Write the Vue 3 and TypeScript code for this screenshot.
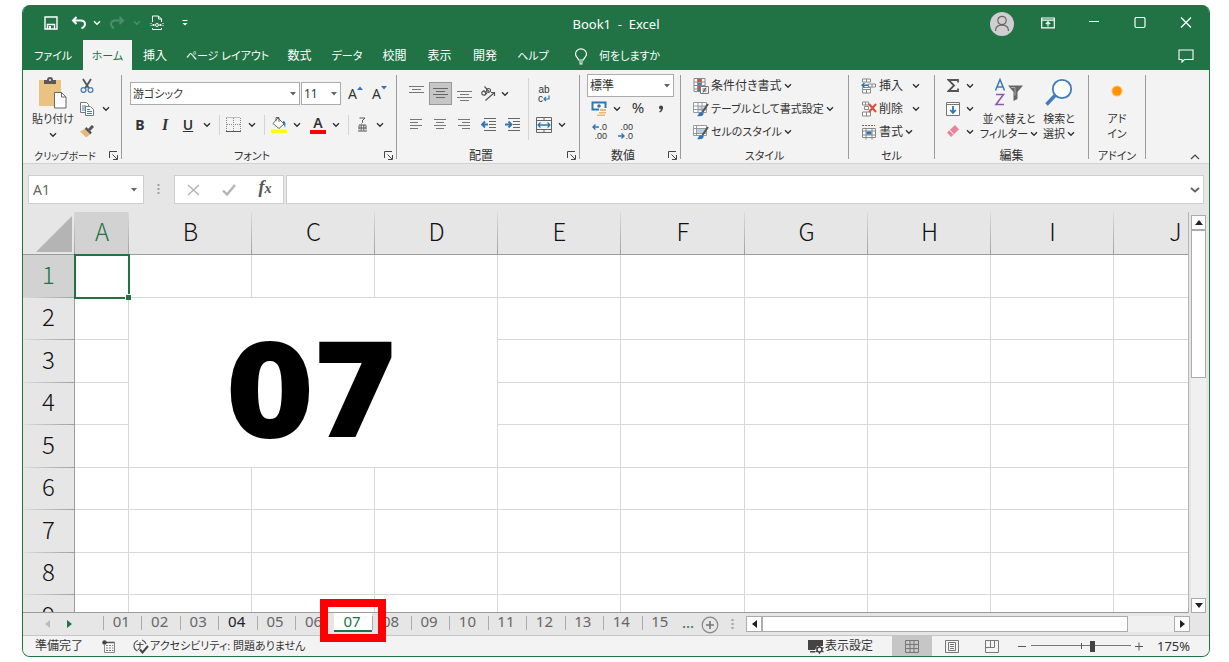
<script setup lang="ts">
import { ref } from 'vue'

interface Column {
  name: string
  width: number
}

const menuTabs: string[] = [
  'ファイル', 'ホーム', '挿入', 'ページ レイアウト', '数式', 'データ', '校閲', '表示', '開発', 'ヘルプ',
]
const activeMenu = ref('ホーム')

const columns: Column[] = [
  { name: 'A', width: 54 },
  { name: 'B', width: 123 },
  { name: 'C', width: 123 },
  { name: 'D', width: 123 },
  { name: 'E', width: 123 },
  { name: 'F', width: 124 },
  { name: 'G', width: 123 },
  { name: 'H', width: 123 },
  { name: 'I', width: 123 },
  { name: 'J', width: 123 },
]
const rows: number[] = [1, 2, 3, 4, 5, 6, 7, 8, 9]

const sheets: string[] = Array.from({ length: 15 }, (_, i) => String(i + 1).padStart(2, '0'))
const activeSheet = ref('07')

const nameBox = ref('A1')
const formula = ref('')
const zoom = ref(62)

const kanaOnly = (text: string): boolean => /^[\u30a0-\u30ff ]+$/.test(text)

// B2:D5 is one merged cell, so the cells it covers are left out of the table.
function isCovered(row: number, col: string): boolean {
  return row >= 2 && row <= 5 && 'BCD'.includes(col) && !(row === 2 && col === 'B')
}
function isMerged(row: number, col: string): boolean {
  return row === 2 && col === 'B'
}
</script>

<template>
  <div class="desktop">
    <svg class="defs" width="0" height="0" aria-hidden="true">
      <symbol id="chev" viewBox="0 0 8 6"><path d="M1 1.2 4 4.2 7 1.2" fill="none" stroke="currentColor" stroke-width="1.4" /></symbol>
      <symbol id="caret" viewBox="0 0 8 6"><path d="M1 1h6L4 4.500z" fill="currentColor" /></symbol>
      <symbol id="launch" viewBox="0 0 10 10"><path d="M.5 7V.5H8M3.500 3.500 8 8M8.500 4v4.500H4" fill="none" stroke="#444" /></symbol>
    </svg>

    <main class="window">
      <header class="title-bar">
        <div class="quick">
          <button type="button" aria-label="上書き保存">
            <svg width="14" height="14" viewBox="0 0 14 14"><path d="M1 1h12v12H1z M3.500 13V8.500h7V13" fill="none" stroke="#fff" stroke-width="1.400" /><path d="M5 10h2v3H5z" fill="#fff" /></svg>
          </button>
          <button type="button" aria-label="元に戻す">
            <svg width="16" height="14" viewBox="0 0 16 14"><path d="M5.500 1 2 4.500 5.500 8M2 4.500h7.500c3 0 4.500 1.500 4.500 3.800 0 1.800-1.200 2.900-3.500 4.200" fill="none" stroke="#fff" stroke-width="2" /></svg>
          </button>
          <button type="button" aria-label="元に戻す一覧"><svg width="8" height="6"><use href="#chev" /></svg></button>
          <button type="button" class="dim" aria-label="やり直し">
            <svg width="16" height="14" viewBox="0 0 16 14"><path d="M10.500 1 14 4.500 10.500 8M14 4.500H6.500C3.500 4.500 2 6 2 8.300c0 1.800 1.200 2.900 3 4" fill="none" stroke="currentColor" stroke-width="2" /></svg>
          </button>
          <button type="button" class="dim" aria-label="やり直し一覧"><svg width="8" height="6"><use href="#chev" /></svg></button>
          <button type="button" aria-label="印刷プレビュー">
            <svg width="14" height="16" viewBox="0 0 14 16"><path d="M2.500 7V1h6l3 3v3M8.500 1v3h3M2.500 13v1.500h9V13" fill="none" stroke="#fff" /><path d="M1 8v4M13 8v4" stroke="#fff" stroke-dasharray="1 1" /><path d="M2.500 9h2v2h-2zM9.500 9h2v2h-2z" fill="#fff" /><circle cx="7" cy="10" r="1.500" fill="none" stroke="#fff" /></svg>
          </button>
          <button type="button" aria-label="クイック アクセス ツール バーのユーザー設定">
            <svg width="8" height="8" viewBox="0 0 8 8"><path d="M1.500 1.500h5" stroke="#fff" /><path d="M1.500 4h5L4 6.500z" fill="#fff" /></svg>
          </button>
        </div>
        <h1>Book1&nbsp; -&nbsp; Excel</h1>
        <div class="window-buttons">
          <button type="button" class="avatar" aria-label="アカウント">
            <svg width="24" height="24" viewBox="0 0 24 24"><circle cx="12" cy="12" r="12" fill="#d0cece" /><circle cx="12" cy="8.500" r="4.200" fill="none" stroke="#666" stroke-width="1.200" /><path d="M5.500 19c0-3.800 2.800-5.800 6.500-5.800s6.500 2 6.500 5.800" fill="none" stroke="#666" stroke-width="1.200" /></svg>
          </button>
          <button type="button" aria-label="リボンの表示オプション">
            <svg width="14" height="12" viewBox="0 0 14 12"><path d="M.7 1h12.600v9.800H.7zM.7 3.200h12.600M7 9.500V5M4.800 7 7 4.800 9.200 7" fill="none" stroke="#fff" stroke-width="1.200" /></svg>
          </button>
          <button type="button" aria-label="最小化"><svg width="12" height="12" viewBox="0 0 12 12"><path d="M1 4.500h10" stroke="#fff" stroke-width="1.200" /></svg></button>
          <button type="button" aria-label="最大化"><svg width="12" height="12" viewBox="0 0 12 12"><rect x="1" y="0.500" width="10" height="10" rx="1.500" fill="none" stroke="#fff" stroke-width="1.200" /></svg></button>
          <button type="button" aria-label="閉じる"><svg width="12" height="12" viewBox="0 0 12 12"><path d="m1 .500 10 10M11 .5l-10 10" stroke="#fff" stroke-width="1.200" /></svg></button>
        </div>
      </header>

      <nav class="menu">
        <div class="menu-tabs">
          <button v-for="tab in menuTabs" :key="tab" type="button" :class="{ active: tab === activeMenu, kana: kanaOnly(tab) }" @click="activeMenu = tab">{{ tab }}</button>
        </div>
        <button type="button" class="tell-me kana">
          <svg width="14" height="17" viewBox="0 0 14 17"><path d="M4.500 12c0-2-3-3-3-6a5.500 5.200 0 0 1 11 0c0 3-3 4-3 6zM5 14h4M5.500 15.800h3" fill="none" stroke="#fff" stroke-width="1.200" /></svg>
          何をしますか
        </button>
        <button type="button" class="comment" aria-label="コメント">
          <svg width="16" height="14" viewBox="0 0 16 14"><path d="M1 1h14v9.500H6.500L4 13v-2.500H1z" fill="none" stroke="#fff" stroke-width="1.100" /></svg>
        </button>
      </nav>

      <section class="ribbon">
        <div class="group clipboard">
          <div class="tools">
            <button type="button" class="big">
              <svg width="30" height="32" viewBox="0 0 30 32"><path d="M1 3h22v26H1z" fill="#eac282" /><path d="M6 3h3a3 3 0 0 1 6 0h3v4H6z" fill="#595959" /><circle cx="12" cy="3" r="1" fill="#f3f3f3" /><path d="M16.500 15.500h7l4.500 4.500v11H16.500z" fill="#fff" stroke="#666" /><path d="M23.500 15.500V20H28" fill="none" stroke="#666" /></svg>
              <span>貼り付け</span>
              <svg width="8" height="6"><use href="#chev" /></svg>
            </button>
            <div class="small">
              <button type="button" aria-label="切り取り"><svg width="14" height="16" viewBox="0 0 14 16"><path d="M3 1l6 9.500M11 1 5 10.500" stroke="#555" stroke-width="1.800" /><circle cx="3.500" cy="12" r="2.400" fill="none" stroke="#4a7fb8" stroke-width="1.300" /><circle cx="10.500" cy="12" r="2.400" fill="none" stroke="#4a7fb8" stroke-width="1.300" /></svg></button>
              <span></span>
              <button type="button" aria-label="コピー"><svg width="16" height="16" viewBox="0 0 16 16"><path d="M1.500 1.500h6l2 2v8h-8z" fill="#fff" stroke="#777" /><path d="M3 5h4M3 7h3M3 9h3" stroke="#4a7fb8" /><path d="M6.500 5.500h5l3 3v6h-8z" fill="#fff" stroke="#777" /><path d="M8 8.500h3M8 10.500h5M8 12.500h5" stroke="#4a7fb8" /></svg></button>
              <button type="button" aria-label="コピーのオプション"><svg width="8" height="6"><use href="#chev" /></svg></button>
              <button type="button" aria-label="書式のコピー"><svg width="14" height="13" viewBox="0 0 14 13"><path d="m9 5 4-4" stroke="#555" stroke-width="3" /><path d="m5.500 3 5.500 5.500" stroke="#555" stroke-width="2.500" /><path d="M4.500 4 10 9.500 6 12.500 0 6.500z" fill="#eab876" /></svg></button>
            </div>
          </div>
          <footer><span class="tiny">クリップボード</span><button type="button" aria-label="クリップボードの詳細"><svg width="10" height="10"><use href="#launch" /></svg></button></footer>
        </div>
        <span class="rule"></span>

        <div class="group font">
          <div class="tools two">
            <div class="row font-top">
              <label class="combo"><select class="kana" aria-label="フォント"><option>游ゴシック</option></select><svg width="8" height="6"><use href="#caret" /></svg></label>
              <label class="combo"><select aria-label="フォント サイズ"><option>11</option></select><svg width="8" height="6"><use href="#caret" /></svg></label>
              <button type="button" class="grow" aria-label="フォント サイズの拡大">A<svg width="6" height="4" viewBox="0 0 6 4"><path d="m0 4 3-3.500L6 4z" fill="#2f75b5" /></svg></button>
              <button type="button" class="grow" aria-label="フォント サイズの縮小">A<svg width="6" height="4" viewBox="0 0 6 4"><path d="m0 0 3 3.500L6 0z" fill="#2f75b5" /></svg></button>
            </div>
            <div class="row font-bottom">
              <button type="button" class="glyph"><b>B</b></button>
              <button type="button" class="glyph"><i>I</i></button>
              <button type="button" class="glyph"><u>U</u></button>
              <button type="button" aria-label="下線の種類"><svg width="8" height="6"><use href="#chev" /></svg></button>
              <span class="thin"></span>
              <button type="button" aria-label="罫線"><svg width="15" height="15" viewBox="0 0 15 15"><path d="M.5.500h14M.5 1v13M7.500 1v13M14.500 1v13M1 7.500h13" fill="none" stroke="#888" stroke-dasharray="1 1" /><path d="M0 14.500h15" stroke="#555" /></svg></button>
              <button type="button" aria-label="罫線の種類"><svg width="8" height="6"><use href="#chev" /></svg></button>
              <span class="thin"></span>
              <button type="button" aria-label="塗りつぶしの色"><svg width="16" height="17" viewBox="0 0 16 17"><path d="m7 2 6 6-5 4.500-6-5z" fill="#fff" stroke="#666" /><path d="M5 5V1.500h3V6" fill="none" stroke="#666" /><path d="M12 5c2.500 0 3 3 2 7-.5-2-1-4-2-5z" fill="#2f75b5" /><path d="M0 13.500h16V17H0z" fill="#ff0" /></svg></button>
              <button type="button" aria-label="塗りつぶしの色一覧"><svg width="8" height="6"><use href="#chev" /></svg></button>
              <button type="button" class="font-color" aria-label="フォントの色">A</button>
              <button type="button" aria-label="フォントの色一覧"><svg width="8" height="6"><use href="#chev" /></svg></button>
              <span class="thin"></span>
              <button type="button" aria-label="ふりがな"><svg width="9" height="15" viewBox="0 0 9 15"><path d="M1.500 1h5.500L4.500 3.500M4.500 3v2.500L3.500 6.500M1 8h7M0 14h9M3.200 8v5.500M5.800 8v5.500M1 8.500v4M8 8.500v4M1 11h7" fill="none" stroke="#555" /></svg></button>
              <button type="button" aria-label="ふりがなの設定"><svg width="8" height="6"><use href="#chev" /></svg></button>
            </div>
          </div>
          <footer><span class="kana">フォント</span><button type="button" aria-label="フォントの詳細"><svg width="10" height="10"><use href="#launch" /></svg></button></footer>
        </div>
        <span class="rule"></span>

        <div class="group align">
          <div class="tools two">
            <div class="row align-top">
              <button type="button" aria-label="上揃え"><svg width="15" height="15" viewBox="0 0 15 15"><path d="M0 .500h15M3 3.500h9M0 6.500h15" stroke="#777" /></svg></button>
              <button type="button" class="pressed" aria-label="上下中央揃え"><svg width="15" height="15" viewBox="0 0 15 15"><path d="M0 2.500h15M3 5.500h9M0 8.500h15M3 11.500h9" stroke="#666" /></svg></button>
              <button type="button" aria-label="下揃え"><svg width="15" height="15" viewBox="0 0 15 15"><path d="M0 5.500h15M3 8.500h9M0 11.500h15M3 14.500h9" stroke="#777" /></svg></button>
              <button type="button" aria-label="方向"><svg width="16" height="16" viewBox="0 0 16 16"><g fill="none" stroke="#555" stroke-width="1.200"><circle cx="3.800" cy="7.200" r="2" /><path d="m3.500 4.500 3.500 3.500" /><circle cx="8.500" cy="4.500" r="2" /><path d="M4.500.5 9 5.500M5.500 14.500l9-8M14.500 10V6.500H11" /></g></svg></button>
              <button type="button" aria-label="方向の種類"><svg width="8" height="6"><use href="#chev" /></svg></button>
              <span></span>
              <span class="thin tall"></span>
              <button type="button" class="wrap" aria-label="折り返して全体を表示する">
                <span>ab</span><span>c<svg width="7" height="7" viewBox="0 0 7 7"><path d="M6 .5V4H1M3 2 1 4l2 2" fill="none" stroke="#2f75b5" stroke-width="1.200" /></svg></span>
              </button>
            </div>
            <div class="row align-bottom">
              <button type="button" aria-label="左揃え"><svg width="12" height="11" viewBox="0 0 12 11"><path d="M0 .500h12M0 3.500h8M0 6.500h12M0 9.500h8" stroke="#777" /></svg></button>
              <button type="button" aria-label="中央揃え"><svg width="12" height="11" viewBox="0 0 12 11"><path d="M0 .500h12M2 3.500h8M0 6.500h12M2 9.500h8" stroke="#777" /></svg></button>
              <button type="button" aria-label="右揃え"><svg width="12" height="11" viewBox="0 0 12 11"><path d="M0 .500h12M4 3.500h8M0 6.500h12M4 9.500h8" stroke="#777" /></svg></button>
              <button type="button" aria-label="インデントを減らす"><svg width="15" height="13" viewBox="0 0 15 13"><path d="M3 .5h12M8 3.500h7M8 6.500h7M8 9.500h7M3 12.500h12" stroke="#666" /><path d="M7 6.500H1M4 3.500l-3 3 3 3" fill="none" stroke="#2f75b5" stroke-width="1.800" /></svg></button>
              <button type="button" aria-label="インデントを増やす"><svg width="15" height="13" viewBox="0 0 15 13"><path d="M3 .5h12M8 3.500h7M8 6.500h7M8 9.500h7M3 12.500h12" stroke="#666" /><path d="M0 6.500h6M3.500 3.500l3 3-3 3" fill="none" stroke="#2f75b5" stroke-width="1.800" /></svg></button>
              <span class="thin tall"></span>
              <button type="button" aria-label="セルを結合して中央揃え"><svg width="16" height="16" viewBox="0 0 16 16"><path d="M.5.5h15v15H.5zM.5 3.500h15M.5 12.500h15M8 .5v3M8 12.500v3" fill="none" stroke="#666" /><path d="M2 8h12M4.500 5.500 2 8l2.500 2.500M11.500 5.500 14 8l-2.500 2.500" fill="none" stroke="#2f75b5" stroke-width="1.300" /></svg></button>
              <button type="button" aria-label="結合の種類"><svg width="8" height="6"><use href="#chev" /></svg></button>
            </div>
          </div>
          <footer><span>配置</span><button type="button" aria-label="配置の詳細"><svg width="10" height="10"><use href="#launch" /></svg></button></footer>
        </div>
        <span class="rule"></span>

        <div class="group number">
          <div class="tools three">
            <label class="combo"><select aria-label="表示形式"><option>標準</option></select><svg width="8" height="6"><use href="#caret" /></svg></label>
            <div class="row number-row">
              <button type="button" aria-label="通貨表示形式"><svg width="16" height="16" viewBox="0 0 16 16"><path d="M1.500 1.500h13v7h-13z" fill="#fff" stroke="#2f75b5" stroke-width="2" /><circle cx="8" cy="5" r="1.800" fill="#2f75b5" /><path d="M8 7h8v9H5v-4h3z" fill="#f3f3f3" /><path d="M9 8h6v2H9zM8 11h7v1.500H8zM6 13.500h8V15H6z" fill="#eab876" /></svg></button>
              <button type="button" aria-label="通貨の種類"><svg width="8" height="6"><use href="#chev" /></svg></button>
              <button type="button" class="percent">%</button>
              <button type="button" aria-label="桁区切りスタイル"><svg width="6" height="8" viewBox="0 0 6 8"><circle cx="3" cy="2.500" r="2" fill="#444" /><path d="M4.300 2.500c0 2-1 3.500-2.800 4.500" fill="none" stroke="#444" stroke-width="1.400" /></svg></button>
            </div>
            <div class="row number-row">
              <button type="button" class="decimal" aria-label="小数点以下の表示桁数を増やす"><span><svg width="7" height="6" viewBox="0 0 7 6"><path d="M7 3H1M3.500.5 1 3l2.500 2.500" fill="none" stroke="#2f75b5" stroke-width="1.400" /></svg>.0</span><span>.00</span></button>
              <span></span>
              <button type="button" class="decimal" aria-label="小数点以下の表示桁数を減らす"><span>.00</span><span><svg width="7" height="6" viewBox="0 0 7 6"><path d="M0 3h6M3.500.5 6 3 3.500 5.500" fill="none" stroke="#2f75b5" stroke-width="1.400" /></svg>.0</span></button>
            </div>
          </div>
          <footer><span>数値</span><button type="button" aria-label="表示形式の詳細"><svg width="10" height="10"><use href="#launch" /></svg></button></footer>
        </div>
        <span class="rule"></span>

        <div class="group styles">
          <div class="tools three">
            <button type="button" class="item">
              <svg width="16" height="16" viewBox="0 0 16 16"><path d="M1 .5h11v13H1zM4.500.5v13M8.500.5v13M1 4h11M1 7.500h11M1 11h11" fill="#fff" stroke="#888" /><path d="M5 1h3v3H5zM5 8h3v3H5z" fill="#d8503c" /><path d="M5 4.500h3v3H5zM5 11h2v2H5z" fill="#4a7fb8" /><path d="M7.500 8.500h8v7h-8z" fill="#fff" stroke="#777" /><path d="M9.500 11h4M9.500 13h4M13 9.500l-3 5" stroke="#555" /></svg>
              条件付き書式<svg width="8" height="6"><use href="#chev" /></svg>
            </button>
            <button type="button" class="item kana">
              <svg width="16" height="16" viewBox="0 0 16 16"><path d="M.5 1.500h13v10H.5z" fill="#fff" /><path d="M5 5h8v5H5z" fill="#c9dbee" /><path d="M.5 1.500h13v10H.5zM5 1.500v10M9 1.500v10M.5 5h13M.5 8.500h13" fill="none" stroke="#999" /><path d="m15 3-5.500 8" stroke="#555" stroke-width="2" /><path d="M4 15c1.500-.5 1.500-4 4.500-4s2.500 3 .5 3.800C8 15.300 5 15.300 4 15z" fill="#2f75b5" /></svg>
              テーブルとして書式設定<svg width="8" height="6"><use href="#chev" /></svg>
            </button>
            <button type="button" class="item kana">
              <svg width="16" height="16" viewBox="0 0 16 16"><path d="M.5 1.500h13v10H.5z" fill="#fff" /><path d="M4 5h9v4H4z" fill="#b8cfe6" /><path d="M.5 1.500h13v10H.5zM3.500 1.500v10M.5 4.500h13M.5 9.500h13" fill="none" stroke="#999" /><path d="m15 3-5.500 8" stroke="#555" stroke-width="2" /><path d="M4 15c1.500-.5 1.500-4 4.500-4s2.500 3 .5 3.800C8 15.300 5 15.300 4 15z" fill="#2f75b5" /></svg>
              セルのスタイル<svg width="8" height="6"><use href="#chev" /></svg>
            </button>
          </div>
          <footer><span class="kana">スタイル</span></footer>
        </div>
        <span class="rule"></span>

        <div class="group cells">
          <div class="tools three">
            <button type="button" class="item wide">
              <svg width="16" height="16" viewBox="0 0 16 16"><path d="M1.500 1h8v3h-8zM5.500 1v3M1.500 11.500h8v3.500h-8zM5.500 11.500V15M1.500 11.500V9.500h8v2M7.500 6h7v3h-7zM11 6v3" fill="#fff" stroke="#888" /><path d="M7 7.300H1M3.500 5 1 7.300l2.500 2.200" fill="none" stroke="#2f75b5" stroke-width="1.400" /></svg>
              挿入<svg width="8" height="6"><use href="#chev" /></svg>
            </button>
            <button type="button" class="item wide">
              <svg width="16" height="16" viewBox="0 0 16 16"><path d="M1.500 1h6v3h-6zM4.500 1v3M1.500 11h8v4h-8zM5.500 11v4M3.500 5.500h4v3h-4z" fill="#fff" stroke="#888" /><path d="m8 3 7 8M15 3l-7 8" stroke="#d8503c" stroke-width="2" /></svg>
              削除<svg width="8" height="6"><use href="#chev" /></svg>
            </button>
            <button type="button" class="item">
              <svg width="16" height="16" viewBox="0 0 16 16"><path d="M1 1.500h13" stroke="#2f75b5" stroke-dasharray="2 1" /><path d="M1.500 4.500h13v9h-13zM1.500 7h13M1.500 11h13M5 4.500v11M11 4.500v11" fill="#fff" stroke="#888" /><path d="M5.500 7.500h5v3h-5z" fill="#2f75b5" /></svg>
              書式<svg width="8" height="6"><use href="#chev" /></svg>
            </button>
          </div>
          <footer><span class="kana">セル</span></footer>
        </div>
        <span class="rule"></span>

        <div class="group editing">
          <div class="tools">
            <div class="edit-small">
              <button type="button" aria-label="オート SUM"><svg width="12" height="13" viewBox="0 0 12 13"><path d="M11 3.500V1H1.500L7 6.500 1.500 12H11V9.500" fill="none" stroke="#555" stroke-width="1.800" /></svg></button>
              <button type="button" aria-label="オート SUM の種類"><svg width="8" height="6"><use href="#chev" /></svg></button>
              <button type="button" aria-label="フィル"><svg width="14" height="14" viewBox="0 0 14 14"><path d="M.5.5h13v13H.5z" fill="#fff" stroke="#777" /><path d="M.5 2.500h13" stroke="#777" /><path d="M7 4v7M4.200 8 7 11l2.800-3" fill="none" stroke="#2f75b5" stroke-width="1.800" /></svg></button>
              <button type="button" aria-label="フィルの種類"><svg width="8" height="6"><use href="#chev" /></svg></button>
              <button type="button" aria-label="クリア"><svg width="14" height="13" viewBox="0 0 14 13"><path d="m9 0 4 4.500-8 7.500-4-4.500z" fill="#e8839b" /><path d="m3.700 5 4 4.500" stroke="#fff" /></svg></button>
              <button type="button" aria-label="クリアの種類"><svg width="8" height="6"><use href="#chev" /></svg></button>
            </div>
            <button type="button" class="big">
              <svg width="30" height="32" viewBox="0 0 30 32"><path d="M1.500 13.500 6 2.500l4.500 11M3 10h6" fill="none" stroke="#3f7cc0" stroke-width="1.600" /><path d="M2 17.500h7.500L2 27.500h8" fill="none" stroke="#8e58ae" stroke-width="1.600" /><path d="M14 8.500h15l-5.500 6.500v7l-4 2v-9z" fill="#666" /><path d="M17 10.500h4v8" fill="none" stroke="#aaa" /></svg>
              <span>並べ替えと</span>
              <span>フィルター<svg width="8" height="6"><use href="#chev" /></svg></span>
            </button>
            <button type="button" class="big find">
              <svg width="30" height="32" viewBox="0 0 30 32"><circle cx="18" cy="12" r="9.200" fill="#fff" stroke="#3f7cb8" stroke-width="1.800" /><path d="m11 18.500-8.500 9" stroke="#3f7cb8" stroke-width="3.500" /></svg>
              <span>検索と</span>
              <span>選択<svg width="8" height="6"><use href="#chev" /></svg></span>
            </button>
          </div>
          <footer><span>編集</span></footer>
        </div>
        <span class="rule"></span>

        <div class="group addin">
          <div class="tools">
            <button type="button" class="big">
              <svg width="30" height="32" viewBox="0 0 30 32"><circle cx="15" cy="14" r="5.500" fill="#ffc36b" /><circle cx="15" cy="14" r="4.500" fill="#ff9200" /></svg>
              <span>アド</span>
              <span>イン</span>
            </button>
          </div>
          <footer><span class="kana">アドイン</span></footer>
        </div>
        <span class="rule"></span>
        <button type="button" class="collapse" aria-label="リボンを折りたたむ"><svg width="10" height="6" viewBox="0 0 10 6"><path d="m1 5 4-4 4 4" fill="none" stroke="#444" stroke-width="1.200" /></svg></button>
      </section>

      <section class="formula-bar">
        <label class="name-box"><input v-model="nameBox" aria-label="名前ボックス"><svg width="8" height="6"><use href="#caret" /></svg></label>
        <svg class="grip" width="3" height="12" viewBox="0 0 3 12"><path d="M.5 1h2v2h-2zM.5 5h2v2h-2zM.5 9h2v2h-2z" fill="#a0a0a0" /></svg>
        <div class="fx-box">
          <button type="button" aria-label="キャンセル"><svg width="13" height="12" viewBox="0 0 13 12"><path d="m1 1 11 10M12 1 1 11" stroke="#b4b4b4" stroke-width="1.500" /></svg></button>
          <button type="button" aria-label="入力"><svg width="14" height="12" viewBox="0 0 14 12"><path d="m1 6.500 4 4L13 1" fill="none" stroke="#b4b4b4" stroke-width="2.400" /></svg></button>
          <button type="button" class="fx" aria-label="関数の挿入"><i>f<small>x</small></i></button>
        </div>
        <label class="formula"><input v-model="formula" aria-label="数式バー"><svg width="10" height="6" viewBox="0 0 10 6"><path d="m1 1 4 3.500L9 1" fill="none" stroke="#666" stroke-width="2" /></svg></label>
      </section>

      <section class="sheet">
        <div class="viewport">
          <table>
            <colgroup>
              <col class="row-head">
              <col v-for="c in columns" :key="c.name" :style="{ width: c.width + 'px' }">
            </colgroup>
            <thead>
              <tr>
                <th class="corner" aria-label="すべて選択"><svg width="36" height="36" viewBox="0 0 36 36"><path d="M36 0v36H0z" fill="#b4b4b4" /></svg></th>
                <th v-for="c in columns" :key="c.name" scope="col" :class="{ current: c.name === 'A' }">{{ c.name }}</th>
              </tr>
            </thead>
            <tbody>
              <tr v-for="r in rows" :key="r">
                <th scope="row" :class="{ current: r === 1 }">{{ r }}</th>
                <template v-for="c in columns" :key="c.name">
                  <td
                    v-if="!isCovered(r, c.name)"
                    :class="{ selected: r === 1 && c.name === 'A', merged: isMerged(r, c.name) }"
                    :colspan="isMerged(r, c.name) ? 3 : 1"
                    :rowspan="isMerged(r, c.name) ? 4 : 1"
                  >{{ isMerged(r, c.name) ? activeSheet : '' }}</td>
                </template>
              </tr>
            </tbody>
          </table>
        </div>
        <div class="vscroll">
          <button type="button" aria-label="上へスクロール"><svg width="8" height="5" viewBox="0 0 8 5"><path d="M0 5 4 0l4 5z" fill="#222" /></svg></button>
          <div class="vthumb"></div>
          <div class="space"></div>
          <button type="button" aria-label="下へスクロール"><svg width="8" height="5" viewBox="0 0 8 5"><path d="m0 0 4 5 4-5z" fill="#222" /></svg></button>
        </div>
      </section>

      <section class="sheet-bar">
        <div class="sheet-nav">
          <button type="button" aria-label="前のシート"><svg width="5" height="8" viewBox="0 0 5 8"><path d="M5 0v8L0 4z" fill="#bbb" /></svg></button>
          <button type="button" aria-label="次のシート"><svg width="5" height="8" viewBox="0 0 5 8"><path d="M0 0v8l5-4z" fill="#217346" /></svg></button>
        </div>
        <div class="sheet-tabs">
          <button v-for="s in sheets" :key="s" type="button" :class="{ active: s === activeSheet, dark: s === '04' }" @click="activeSheet = s">{{ s }}</button>
        </div>
        <button type="button" class="more">...</button>
        <button type="button" class="add" aria-label="新しいシート"><svg width="18" height="18" viewBox="0 0 18 18"><circle cx="9" cy="9" r="7.800" fill="none" stroke="#888" stroke-width="1.200" /><path d="M9 5v8M5 9h8" stroke="#777" stroke-width="1.600" /></svg></button>
        <svg class="grip" width="3" height="12" viewBox="0 0 3 12"><path d="M.5 1h2v2h-2zM.5 5h2v2h-2zM.5 9h2v2h-2z" fill="#a0a0a0" /></svg>
        <div class="hscroll">
          <button type="button" aria-label="左へスクロール"><svg width="5" height="8" viewBox="0 0 5 8"><path d="M5 0v8L0 4z" fill="#222" /></svg></button>
          <div class="hthumb"></div>
          <button type="button" aria-label="右へスクロール"><svg width="5" height="8" viewBox="0 0 5 8"><path d="M0 0v8l5-4z" fill="#222" /></svg></button>
        </div>
      </section>

      <footer class="status">
        <span class="ready">準備完了</span>
        <button type="button" class="macro" aria-label="マクロの記録"><svg width="13" height="13" viewBox="0 0 13 13"><path d="M3 2.500h9.500v10h-10V5" fill="#fff" stroke="#888" /><path d="M4 2.500h8.500" stroke="#555" stroke-width="1.500" /><path d="M4 5.500h2M7 5.500h2M10 5.500h1.500M4 8h2M7 8h2M10 8h1.500M4 10.500h2M7 10.500h2M10 10.500h1.500" stroke="#777" stroke-width="1.200" /><circle cx="2.500" cy="2.500" r="2.200" fill="#444" /></svg></button>
        <button type="button" class="access kana"><svg width="16" height="15" viewBox="0 0 16 15"><path d="M5 1.500C2 2.500 1 4.500 1 7s1.500 4 3.500 5M9 1c2.500 1 3.500 2 4 4M3.500 5.500h7M7 3v5.500L5 11" fill="none" stroke="#555" stroke-width="1.200" /><path d="M7 10.500 9.500 13.500 15 7" fill="none" stroke="#444" stroke-width="2" /></svg>アクセシビリティ: 問題ありません</button>
        <span class="space"></span>
        <button type="button" class="display"><svg width="16" height="15" viewBox="0 0 16 15"><path d="M0 1h15v6H9L7 11H0zM2 12h5v1.500H2z" fill="#444" /><circle cx="11.500" cy="10.500" r="2.500" fill="#f3f3f3" stroke="#444" stroke-width="1.500" /><path d="M11.500 6v2M11.500 13v2M7.500 8.500l1.500 1M14 12l1.500 1M15.500 8.500l-1.500 1M9 12l-1.500 1" stroke="#444" stroke-width="1.300" /></svg>表示設定</button>
        <button type="button" class="view on" aria-label="標準"><svg width="14" height="13" viewBox="0 0 14 13"><path d="M.5.500h13v12H.5zM5 .5v12M9 .5v12M.5 4.500h13M.5 8.500h13" fill="none" stroke="#777" /></svg></button>
        <button type="button" class="view" aria-label="ページ レイアウト"><svg width="14" height="13" viewBox="0 0 14 13"><path d="M.5.500h13v12H.5zM3.500 2.500h7v8h-7zM5 4.500h4M5 6.500h4M5 8.500h4" fill="none" stroke="#777" /></svg></button>
        <button type="button" class="view" aria-label="改ページ プレビュー"><svg width="14" height="13" viewBox="0 0 14 13"><path d="M.5.500h13v12H.5zM5.500.500v7M9.500.500v7M.5 7.500h9" fill="none" stroke="#777" /></svg></button>
        <button type="button" class="minus" aria-label="縮小"><svg width="8" height="9" viewBox="0 0 8 9"><path d="M0 4.500h8" stroke="#555" /></svg></button>
        <input v-model.number="zoom" class="zoom" type="range" min="0" max="100" aria-label="ズーム">
        <button type="button" class="plus" aria-label="拡大"><svg width="8" height="9" viewBox="0 0 8 9"><path d="M0 4.500h8M4 .5v8" stroke="#555" /></svg></button>
        <span class="percent-label">175%</span>
      </footer>
    </main>
  </div>
</template>

<style>
body {
  margin: 0;
  background: #fff;
}
</style>

<style scoped>
*,
*::after {
  box-sizing: border-box;
}
.desktop {
  height: 100vh;
  padding: 5px 19px 5px 22px;
  font-family: "Noto Sans", "Noto Sans CJK JP", sans-serif;
  font-size: 12px;
  line-height: 16px;
  font-feature-settings: "palt";
  color: #333;
}
.defs {
  position: absolute;
}
button,
input,
select {
  font: inherit;
  font-feature-settings: inherit;
  color: inherit;
  background: none;
  border: 0;
  padding: 0;
  margin: 0;
}
button {
  display: flex;
  align-items: center;
  justify-content: center;
  white-space: nowrap;
}
svg {
  display: block;
  flex: none;
}
.kana {
  font-size: 11px;
}
.tiny {
  font-size: 10px;
}
.window {
  height: 100%;
  display: flex;
  flex-direction: column;
  border: 1px solid #217346;
  border-top: 0;
  border-radius: 8px;
  overflow: hidden;
  background: #e6e6e6;
}

.title-bar {
  flex: none;
  height: 35px;
  display: grid;
  grid-template-columns: 1fr auto 1fr;
  align-items: center;
  background: #217346;
  color: #fff;
}
.title-bar h1 {
  margin: 2px 0 0;
  font-size: 13px;
  font-weight: 400;
}
.quick {
  display: grid;
  grid-template-columns: 28px 28px 8px 32px 8px 32px 24px;
  height: 34px;
  padding-left: 14px;
}
.dim {
  color: #4d8f6a;
}
.window-buttons {
  display: flex;
  justify-content: flex-end;
  height: 33px;
}
.window-buttons button {
  width: 46px;
}
.window-buttons .avatar {
  height: 35px;
}

.menu {
  flex: none;
  height: 30px;
  display: flex;
  background: #217346;
  color: #fff;
}
.menu-tabs {
  display: grid;
  grid-template-columns: 60px 49px 46px 99px 45px 50px 45px 45px 46px 50px;
}
.menu button {
  padding-top: 2px;
}
.menu-tabs .active {
  background: #f3f3f3;
  color: #217346;
}
.tell-me {
  gap: 11px;
  margin-left: 16px;
}
.comment {
  margin-left: auto;
  width: 46px;
}

.ribbon {
  flex: none;
  height: 94px;
  display: flex;
  background: #f3f3f3;
  border-bottom: 1px solid #d2d2d2;
}
.rule {
  width: 1px;
  margin: 5px 0 4px;
  background: #9c9c9c;
}
.group {
  display: flex;
  flex-direction: column;
  padding-top: 4px;
}
.tools {
  height: 73px;
  display: flex;
}
.tools.two,
.tools.three {
  flex-direction: column;
}
.tools.two {
  padding-top: 4px;
}
.group > footer {
  display: flex;
  height: 16px;
  align-items: center;
  padding-top: 2px;
}
.group > footer span {
  flex: 1;
  text-align: center;
}
.group > footer button {
  width: 14px;
}
.row {
  display: grid;
}
.two .row {
  height: 31px;
}
.three > * {
  height: 23px;
}
.thin {
  width: 1px;
  height: 20px;
  background: #d4d4d4;
  place-self: center;
}
.thin.tall {
  height: 31px;
}
.combo {
  position: relative;
  display: block;
  height: 23px;
  align-self: center;
}
.combo select {
  appearance: none;
  width: 100%;
  height: 23px;
  padding: 0 2px;
  background: #fff;
  border: 1px solid #ababab;
}
.combo svg,
.name-box svg {
  position: absolute;
  right: 3px;
  top: 9px;
  color: #666;
  pointer-events: none;
}
.big {
  flex-direction: column;
  justify-content: flex-start;
  padding-top: 3px;
  font-size: 11px;
  line-height: 15px;
}
.big span {
  display: flex;
  align-items: center;
  gap: 2px;
}
.big > svg:first-child {
  margin-bottom: 2px;
}
.clipboard {
  width: 98px;
}
.clipboard .big {
  width: 60px;
}
.clipboard .big > svg:last-child {
  margin-top: 6px;
}
.small {
  display: grid;
  grid-template-columns: 16px 14px;
  grid-template-rows: 23px 23px 23px;
  column-gap: 4px;
  margin-left: -4px;
}
.font {
  width: 274px;
}
.font-top {
  grid-template-columns: 170px 40px 27px 19px;
  column-gap: 1px;
  padding-left: 8px;
}
.font-bottom {
  grid-template-columns: 24px 26px 20px 18px 6px 22px 16px 8px 22px 14px 28px 8px 16px 12px 24px;
  padding-left: 6px;
}
.grow {
  font-size: 14px;
}
.grow svg {
  margin-bottom: 12px;
}
.glyph {
  font-size: 14px;
}
.glyph i {
  font-family: "Liberation Serif", serif;
  font-size: 16px;
  font-weight: 700;
}
.glyph u {
  font-weight: 600;
}
.font-color {
  place-self: center;
  width: 16px;
  height: 18px;
  border-bottom: 4px solid #f00;
  font-size: 14px;
  font-weight: 600;
}
.align {
  width: 182px;
}
.align .row {
  padding-left: 7px;
}
.align-top {
  grid-template-columns: 24px 24px 24px 24px 10px 14px 9px 22px 14px;
}
.align-bottom {
  grid-template-columns: 24px 24px 24px 24px 24px 9px 22px 14px;
}
.pressed {
  width: 23px;
  height: 23px;
  place-self: center;
  background: #c6c6c6;
  border: 1px solid #979797;
}
.wrap,
.decimal {
  flex-direction: column;
  font-family: "Liberation Sans", sans-serif;
}
.wrap {
  font-size: 10px;
  line-height: 9px;
}
.wrap span,
.decimal span {
  display: flex;
  align-items: center;
}
.number {
  width: 100px;
}
.number .combo {
  margin-left: 7px;
  width: 87px;
  align-self: flex-start;
}
.number-row {
  grid-template-columns: 24px 12px 30px 16px;
  padding-left: 7px;
}
.number-row:last-child {
  grid-template-columns: 20px 2px 24px;
}
.percent {
  font-size: 15px;
  padding-bottom: 3px;
}
.decimal {
  align-items: flex-end;
  font-size: 9px;
  line-height: 9px;
}
.styles {
  width: 167px;
}
.item {
  justify-content: flex-start;
  gap: 2px;
  padding-left: 12px;
}
.cells {
  width: 85px;
}
.wide svg:last-child {
  margin-left: 7px;
}
.editing {
  width: 153px;
}
.edit-small {
  display: grid;
  grid-template-columns: 20px 14px;
  grid-template-rows: 23px 23px 23px;
  padding-left: 8px;
}
.editing .big {
  width: 64px;
}
.editing .find {
  width: 36px;
}
.addin,
.addin .big {
  width: 56px;
}
.collapse {
  margin-left: auto;
  width: 28px;
  align-items: flex-end;
  padding-bottom: 3px;
}

.formula-bar {
  flex: none;
  height: 48px;
  display: flex;
  padding: 11px 5px 0;
}
.name-box,
.fx-box,
.formula {
  height: 29px;
  background: #fff;
  border: 1px solid #cecece;
  position: relative;
}
.name-box {
  width: 116px;
}
.name-box svg {
  top: 11px;
  right: 5px;
}
.name-box input {
  width: 90px;
  height: 27px;
  padding: 0 4px;
  font-size: 14px;
  color: #666;
}
.formula-bar .grip {
  margin: 8px 14px 0 13px;
}
.fx-box {
  display: grid;
  grid-template-columns: 1fr 1fr 1fr;
  width: 110px;
  margin-right: 2px;
}
.fx {
  font-family: "Liberation Serif", serif;
  font-size: 18px;
  font-weight: 700;
  color: #555;
  padding-bottom: 3px;
}
.fx small {
  font-size: 14px;
}
.formula {
  flex: 1;
  display: flex;
  align-items: center;
}
.formula input {
  flex: 1;
  min-width: 0;
  height: 27px;
  padding: 0 6px;
}
.formula svg {
  margin-right: 3px;
}

.sheet {
  flex: 1;
  min-height: 0;
  display: flex;
}
.viewport {
  flex: 1;
  min-width: 0;
  overflow: hidden;
  border-right: 1px solid #b4b4b4;
  border-bottom: 1px solid #9c9c9c;
}
table {
  table-layout: fixed;
  width: 1214px;
  border-spacing: 0;
  background: #fff;
}
.row-head {
  width: 52px;
}
th,
td {
  padding: 0;
  height: 42px;
  border-right: 1px solid #d8d8d8;
  border-bottom: 1px solid #d8d8d8;
}
tbody tr:nth-child(odd) > * {
  height: 43px;
}
th {
  padding-bottom: 6px;
  font-family: "Noto Sans CJK JP", sans-serif;
  font-size: 24px;
  line-height: 24px;
  font-weight: 300;
  color: #111;
  background-color: #e6e6e6;
}
thead th {
  height: 43px;
  padding-bottom: 4px;
  border-right: 0;
  border-bottom-color: #9c9c9c;
  background-image: linear-gradient(#dcdcdc, #a0a0a0);
  background-size: 1px 100%;
  background-position: right;
  background-repeat: no-repeat;
}
tbody th {
  border-right-color: #9c9c9c;
  border-bottom: 0;
  background-image: linear-gradient(to right, #dcdcdc, #a0a0a0);
  background-size: 100% 1px;
  background-position: bottom;
  background-repeat: no-repeat;
}
th.current {
  background-color: #d2d2d2;
  color: #217346;
}
thead .corner {
  vertical-align: bottom;
  padding: 0 0 2px 13px;
}
.selected {
  position: relative;
  outline: 2px solid #217346;
  outline-offset: -1px;
}
.selected::after {
  content: "";
  position: absolute;
  right: -3px;
  bottom: -3px;
  width: 6px;
  height: 6px;
  background: #217346;
  border: solid #fff;
  border-width: 1px 0 0 1px;
}
.merged {
  padding-top: 18px;
  text-align: center;
  font-family: "DejaVu Sans", sans-serif;
  font-weight: 700;
  font-size: 124px;
  line-height: 124px;
  color: #000;
  -webkit-text-stroke: 4px #000;
}
.vscroll {
  width: 20px;
  padding: 3px 3px 0 2px;
  display: flex;
  flex-direction: column;
}
.vscroll button {
  height: 15px;
  background: #fff;
  border: 1px solid #ababab;
}
.vthumb {
  height: 148px;
  background: #fff;
  border: 1px solid #ababab;
}
.space {
  flex: 1;
}
.vscroll .space {
  background: #f0f0f0;
}

.sheet-bar {
  flex: none;
  height: 23px;
  display: flex;
  align-items: center;
  border-bottom: 1px solid #c6c6c6;
  position: relative;
  z-index: 1;
}
.sheet-nav {
  display: grid;
  grid-template-columns: 22px 22px;
  padding: 0 23px 0 13px;
}
.sheet-tabs {
  flex: 0 1 577px;
  display: flex;
  align-self: stretch;
  font-size: 15px;
  color: #666;
}
.sheet-tabs button {
  flex: 1;
  align-items: flex-start;
  padding-right: 2px;
  line-height: 16px;
  background: linear-gradient(#ababab, #ababab) left 3px / 1px 14px no-repeat;
}
.sheet-tabs .dark {
  color: #222;
}
.sheet-tabs .active {
  position: relative;
  height: 19px;
  background: #fff;
  color: #217346;
  border-bottom: 2px solid #217346;
}
.sheet-tabs .active::after {
  content: "";
  position: absolute;
  left: -14px;
  right: -14px;
  top: -14px;
  height: 43px;
  border: 8px solid #f00;
}
.more {
  width: 16px;
  padding-bottom: 4px;
  font-size: 15px;
  color: #217346;
}
.add {
  width: 28px;
  padding-top: 1px;
}
.sheet-bar .grip {
  margin: 0 12px 0 7px;
}
.hscroll {
  flex: 1;
  height: 16px;
  margin-right: 19px;
  display: flex;
  background: #f0f0f0;
}
.hscroll button {
  width: 16px;
  background: #fff;
  border: 1px solid #ababab;
}
.hthumb {
  flex: 1;
  margin-right: 46px;
  background: #fff;
  border: 1px solid #ababab;
}

.status {
  flex: none;
  height: 20px;
  display: flex;
  align-items: stretch;
  background: #f3f3f3;
  line-height: 20px;
}
.ready {
  padding-left: 12px;
}
.macro {
  width: 50px;
}
.access svg {
  margin-right: 1px;
}
.display {
  gap: 1px;
  margin-right: 19px;
}
.view {
  width: 40px;
}
.on {
  background: #c6c6c6;
}
.minus {
  width: 19px;
}
.plus {
  width: 16px;
}
.zoom {
  appearance: none;
  width: 100px;
  height: 20px;
  background:
    linear-gradient(#555, #555) 50px 7px / 1px 6px no-repeat,
    linear-gradient(#777, #777) 0 9px / 100% 1px no-repeat;
}
.zoom::-webkit-slider-thumb {
  appearance: none;
  width: 5px;
  height: 11px;
  background: #444;
}
.percent-label {
  width: 62px;
  padding-left: 10px;
  font-size: 13px;
}
</style>
